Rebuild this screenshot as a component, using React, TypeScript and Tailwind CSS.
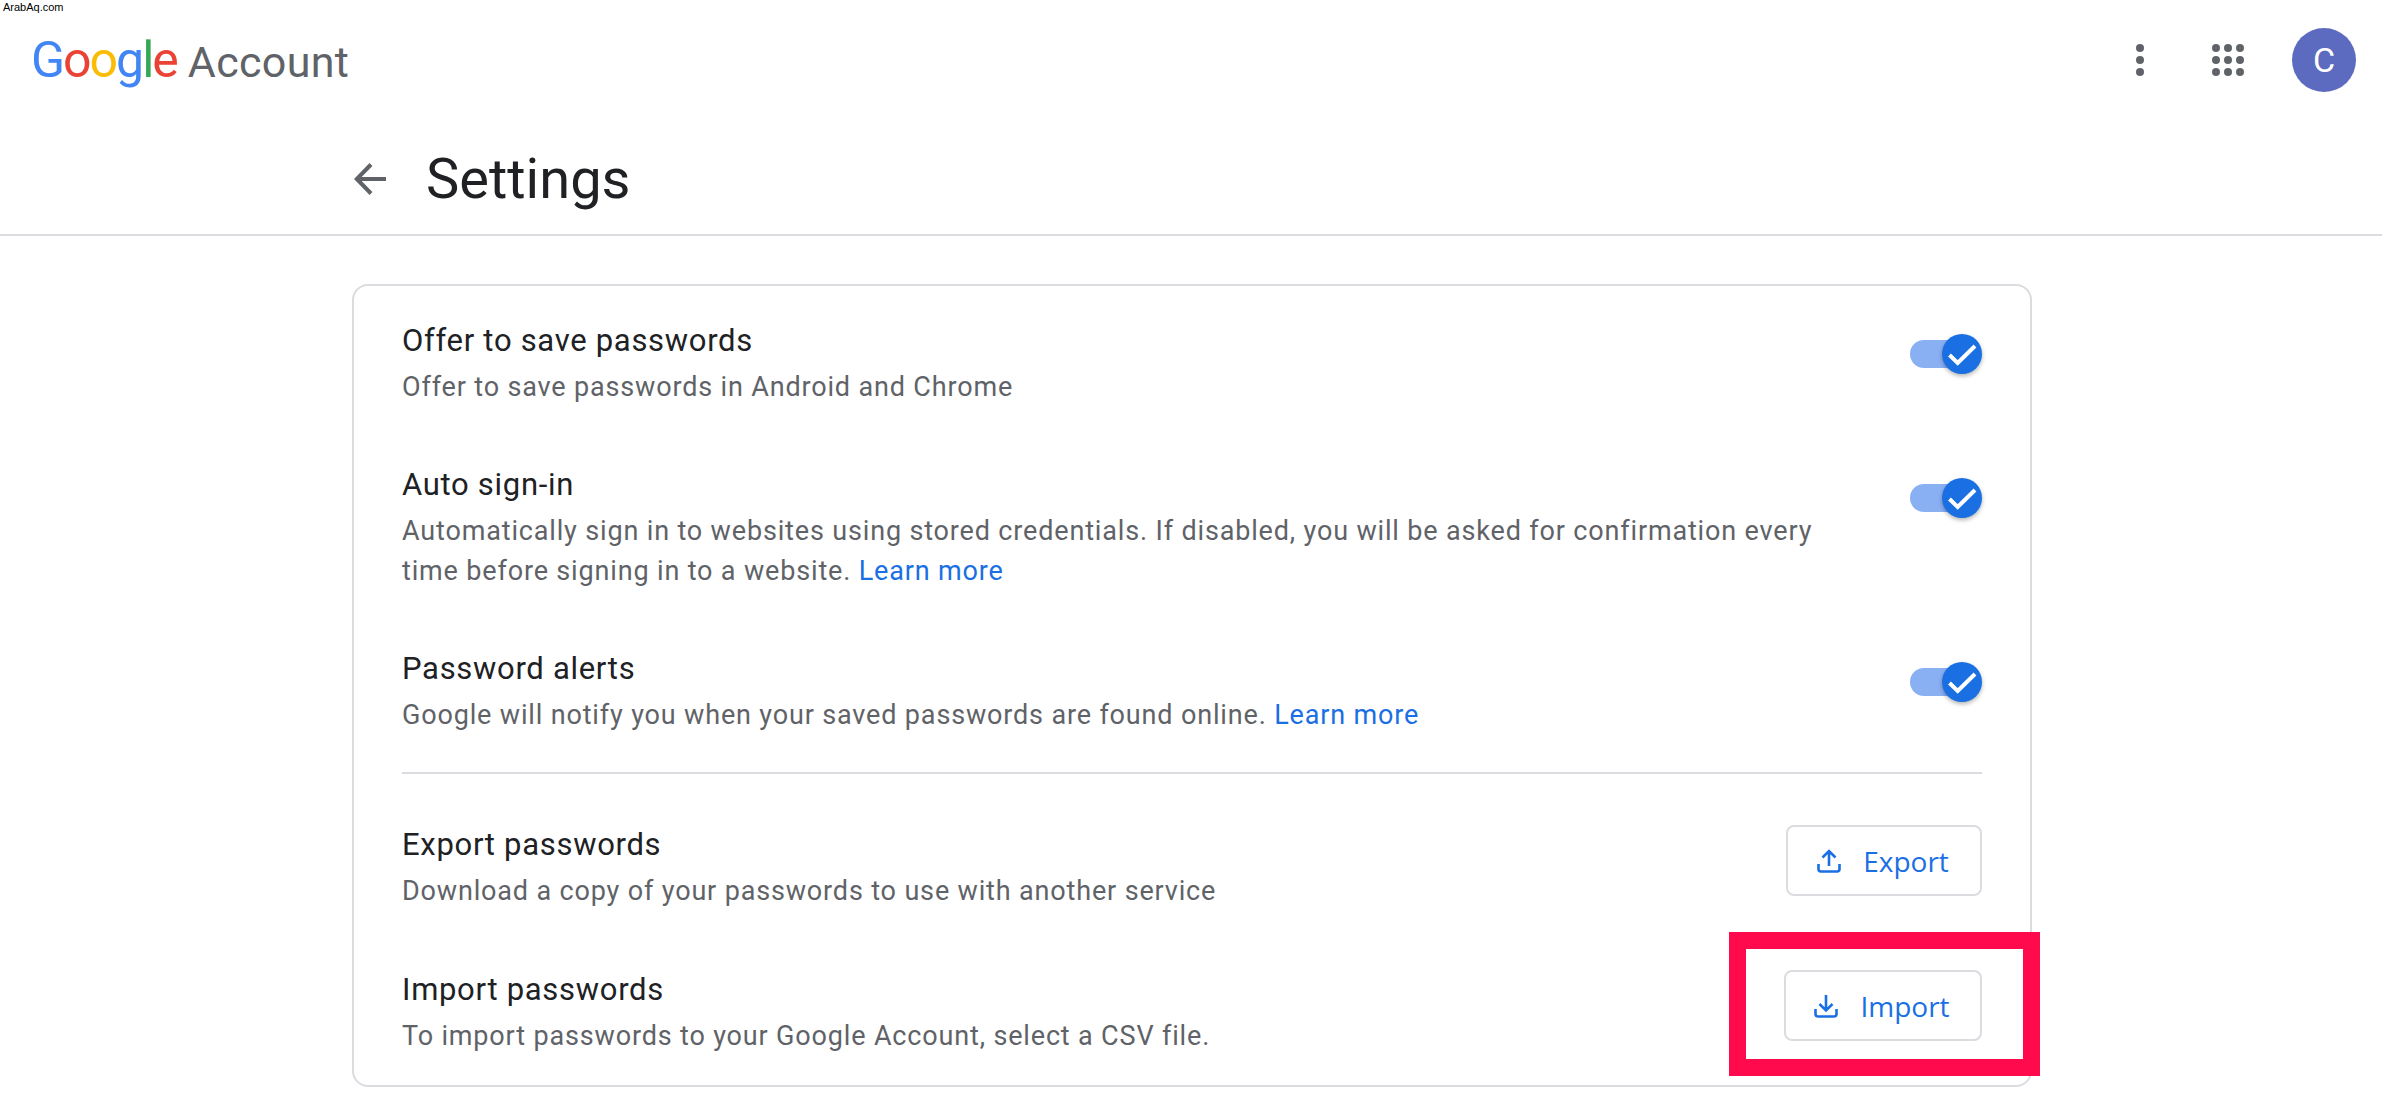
import React from "react";

function Toggle() {
  return (
    <div className="relative mt-[19px] h-[40px] w-[72px] shrink-0">
      <div className="absolute left-0 top-[6px] h-[28px] w-[56px] rounded-full bg-[#8ab0f4]" />
      <div className="absolute right-0 top-0 h-[40px] w-[40px] rounded-full bg-[#1a6fe3] shadow-[0_2px_4px_rgba(0,0,0,0.3)]">
        <svg width="40" height="40" viewBox="0 0 40 40" fill="none">
          <path d="M7.5 21 L15.7 29 L33 12" stroke="#fff" strokeWidth="4" />
        </svg>
      </div>
    </div>
  );
}

function Row({ title, children, right }: { title: string; children: React.ReactNode; right: React.ReactNode }) {
  return (
    <div className="flex items-start justify-between">
      <div className="min-w-0 max-w-[1440px] flex-1">
        <div className="font-['Roboto',sans-serif] text-[31px] leading-[52px] tracking-[0.7px] text-[#202124]">{title}</div>
        <div className="font-['Roboto',sans-serif] text-[27px] leading-[40px] tracking-[0.84px] text-[#5f6368]">{children}</div>
      </div>
      {right}
    </div>
  );
}

function Btn({ label, up, w }: { label: string; up: boolean; w: string }) {
  return (
    <div className={`flex h-[71px] ${w} mt-[6px] shrink-0 items-center justify-center gap-[22px] rounded-[8px] border-2 border-[#dadce0] bg-white pr-[2px]`}>
      <svg width="24" height="24" viewBox="0 0 24 24" fill="none" stroke="#1a6fe3" strokeWidth="2.6">
        <path d="M1.5 15 V20 Q1.5 22.5 4 22.5 H20 Q22.5 22.5 22.5 20 V15" />
        {up ? <path d="M12 17 V2.5 M5.5 8.5 L12 2 L18.5 8.5" /> : <path d="M12 1 V16 M5.5 10 L12 16.5 L18.5 10" />}
      </svg>
      <span className="font-['Open_Sans',sans-serif] text-[28px] leading-none tracking-[0px] text-[#1a6fe3]">{label}</span>
    </div>
  );
}

export default function App() {
  return (
    <div className="relative h-[1114px] w-[2382px] overflow-hidden bg-white">
      <header className="h-[236px] border-b-2 border-[#dadce0]">
        <div className="flex h-[147px] items-start justify-between pl-[3px] pr-[26px]">
          <div>
            <div className="font-['Liberation_Sans',sans-serif] text-[11px] leading-[14px] text-black">ArabAq.com</div>
            <div className="ml-[28px] mt-[20px] flex items-baseline font-['Roboto',sans-serif] leading-[52px]">
              <span className="text-[50px] tracking-[-2px]">
                <span className="text-[#4285f4]">G</span>
                <span className="text-[#ea4335]">o</span>
                <span className="text-[#fbbc05]">o</span>
                <span className="text-[#4285f4]">g</span>
                <span className="text-[#34a853]">l</span>
                <span className="text-[#ea4335]">e</span>
              </span>
              <span className="ml-[11px] text-[43px] tracking-[0.3px] text-[#5f6368]">Account</span>
            </div>
          </div>
          <div className="mt-[28px] flex items-center">
            <svg width="8" height="32" viewBox="0 0 8 32" fill="#5f6368" className="mr-[68px]">
              <circle cx="4" cy="4" r="4" />
              <circle cx="4" cy="16" r="4" />
              <circle cx="4" cy="28" r="4" />
            </svg>
            <svg width="32" height="32" viewBox="0 0 32 32" fill="#5f6368" className="mr-[48px]">
              {[4, 16, 28].map((y) =>
                [4, 16, 28].map((x) => <circle key={`${x}-${y}`} cx={x} cy={y} r="4" />)
              )}
            </svg>
            <div className="flex h-[64px] w-[64px] items-center justify-center rounded-full bg-[#5c6bc0] font-['Roboto',sans-serif] text-[34px] text-white">
              C
            </div>
          </div>
        </div>
        <div className="ml-[354px] flex items-center">
          <svg width="32" height="32" viewBox="0 0 32 32" fill="none" stroke="#5f6368" strokeWidth="4">
            <path d="M32 16 H3 M17 1.5 L2.8 16 L17 30.5" />
          </svg>
          <h1 className="ml-[40px] font-['Roboto',sans-serif] text-[56px] font-normal leading-[64px] text-[#202124]">Settings</h1>
        </div>
      </header>

      <main className="ml-[352px] mt-[48px] flex h-[803px] w-[1680px] flex-col rounded-[16px] border-2 border-[#dadce0] pb-[26px] pl-[48px] pr-[48px] pt-[29px]">
        <div className="flex flex-col gap-[52px]">
          <Row title="Offer to save passwords" right={<Toggle />}>
            Offer to save passwords in Android and Chrome
          </Row>
          <Row title="Auto sign-in" right={<Toggle />}>
            Automatically sign in to websites using stored credentials. If disabled, you will be asked for confirmation every time before signing in to a website.{" "}
            <span className="text-[#1a6fe3]">Learn more</span>
          </Row>
          <Row title="Password alerts" right={<Toggle />}>
            Google will notify you when your saved passwords are found online.{" "}
            <span className="text-[#1a6fe3]">Learn more</span>
          </Row>
        </div>
        <div className="mb-[45px] mt-[37px] h-[2px] shrink-0 bg-[#dadce0]" />
        <div className="flex flex-col gap-[53px]">
          <Row title="Export passwords" right={<Btn label="Export" up w="w-[196px]" />}>
            Download a copy of your passwords to use with another service
          </Row>
          <Row title="Import passwords" right={<Btn label="Import" up={false} w="w-[198px]" />}>
            To import passwords to your Google Account, select a CSV file.
          </Row>
        </div>
      </main>

      <div className="absolute left-[1729px] top-[932px] h-[144px] w-[311px] border-[17px] border-[#ff0a4d]" />
    </div>
  );
}
